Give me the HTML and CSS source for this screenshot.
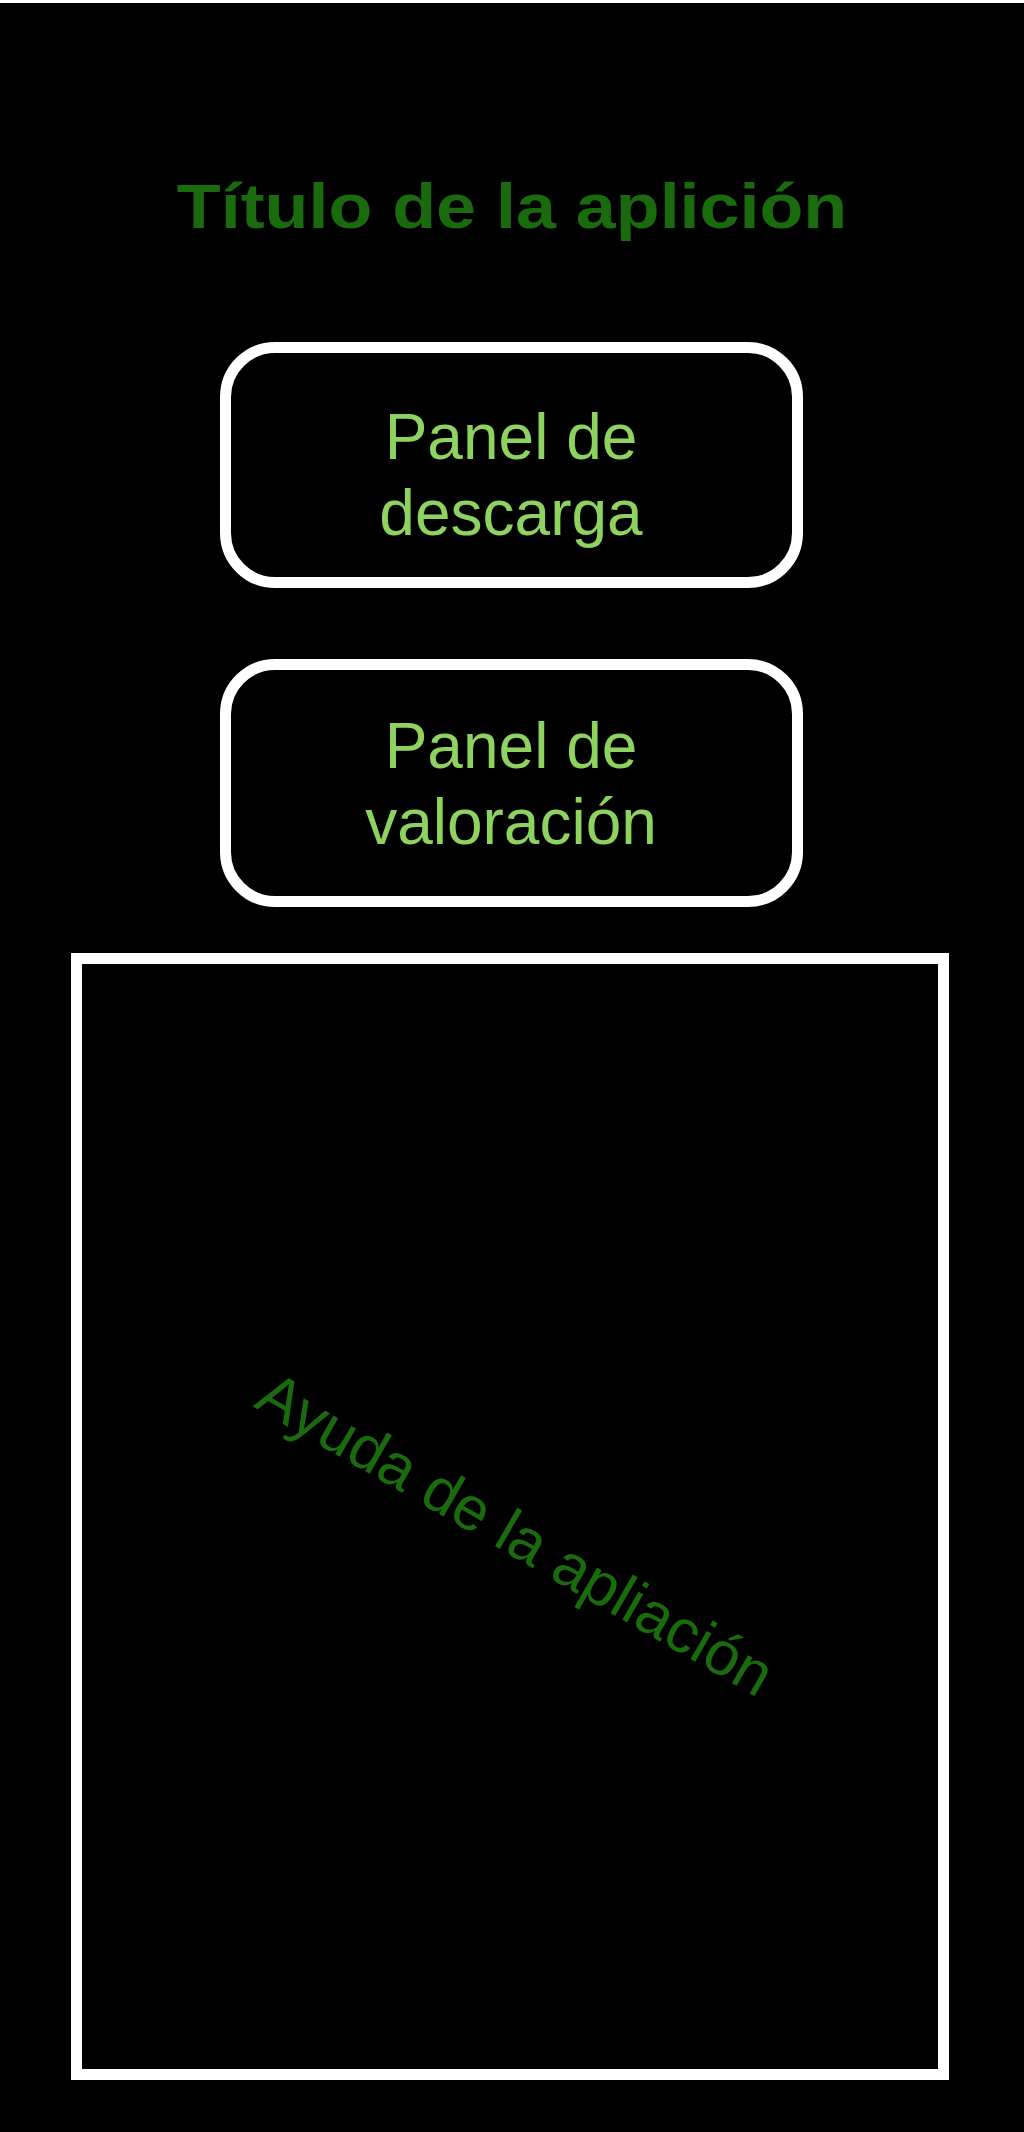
FILE: index.html
```html
<!DOCTYPE html>
<html lang="es">
<head>
<meta charset="utf-8">
<title>Título de la aplición</title>
<link rel="stylesheet" href="styles.css">
</head>
<body>
<main class="page">
  <h1 class="app-title">Título de la aplición</h1>
  <div class="panel panel-download">Panel de<br>descarga</div>
  <div class="panel panel-rating">Panel de<br>valoración</div>
  <section class="help-box">
    <p class="help-text">Ayuda de la apliación</p>
  </section>
</main>
</body>
</html>
```
FILE: styles.css
```css
html {
  background: #ffffff;
}
body {
  margin: 0;
}
.page {
  margin-top: 3px;
  min-height: 2129px;
  background: #000000;
  display: flex;
  flex-direction: column;
  align-items: center;
  font-family: "Liberation Sans", Arial, sans-serif;
}
.app-title {
  margin: 167px 0 0;
  font-size: 63px;
  line-height: 72px;
  font-weight: 700;
  color: #1a6b0e;
  transform: scaleX(1.14);
  white-space: nowrap;
}
.panel {
  box-sizing: border-box;
  width: 583px;
  margin-right: 2px;
  border: 11px solid #ffffff;
  border-radius: 55px;
  color: #8ed35f;
  font-size: 64px;
  line-height: 76px;
  text-align: center;
}
.panel-download {
  margin-top: 100px;
  height: 246px;
  padding-top: 46px;
}
.panel-rating {
  margin-top: 71px;
  height: 248px;
  padding-top: 38px;
}
.help-box {
  box-sizing: border-box;
  margin-top: 46px;
  margin-right: 4px;
  width: 878px;
  height: 1127px;
  border: 11px solid #ffffff;
  display: flex;
  align-items: center;
  justify-content: center;
}
.help-text {
  margin: 0;
  font-size: 61.5px;
  line-height: 70px;
  color: #1a6b0e;
  white-space: nowrap;
  transform: translate(6px, 17px) rotate(30deg);
}
```
